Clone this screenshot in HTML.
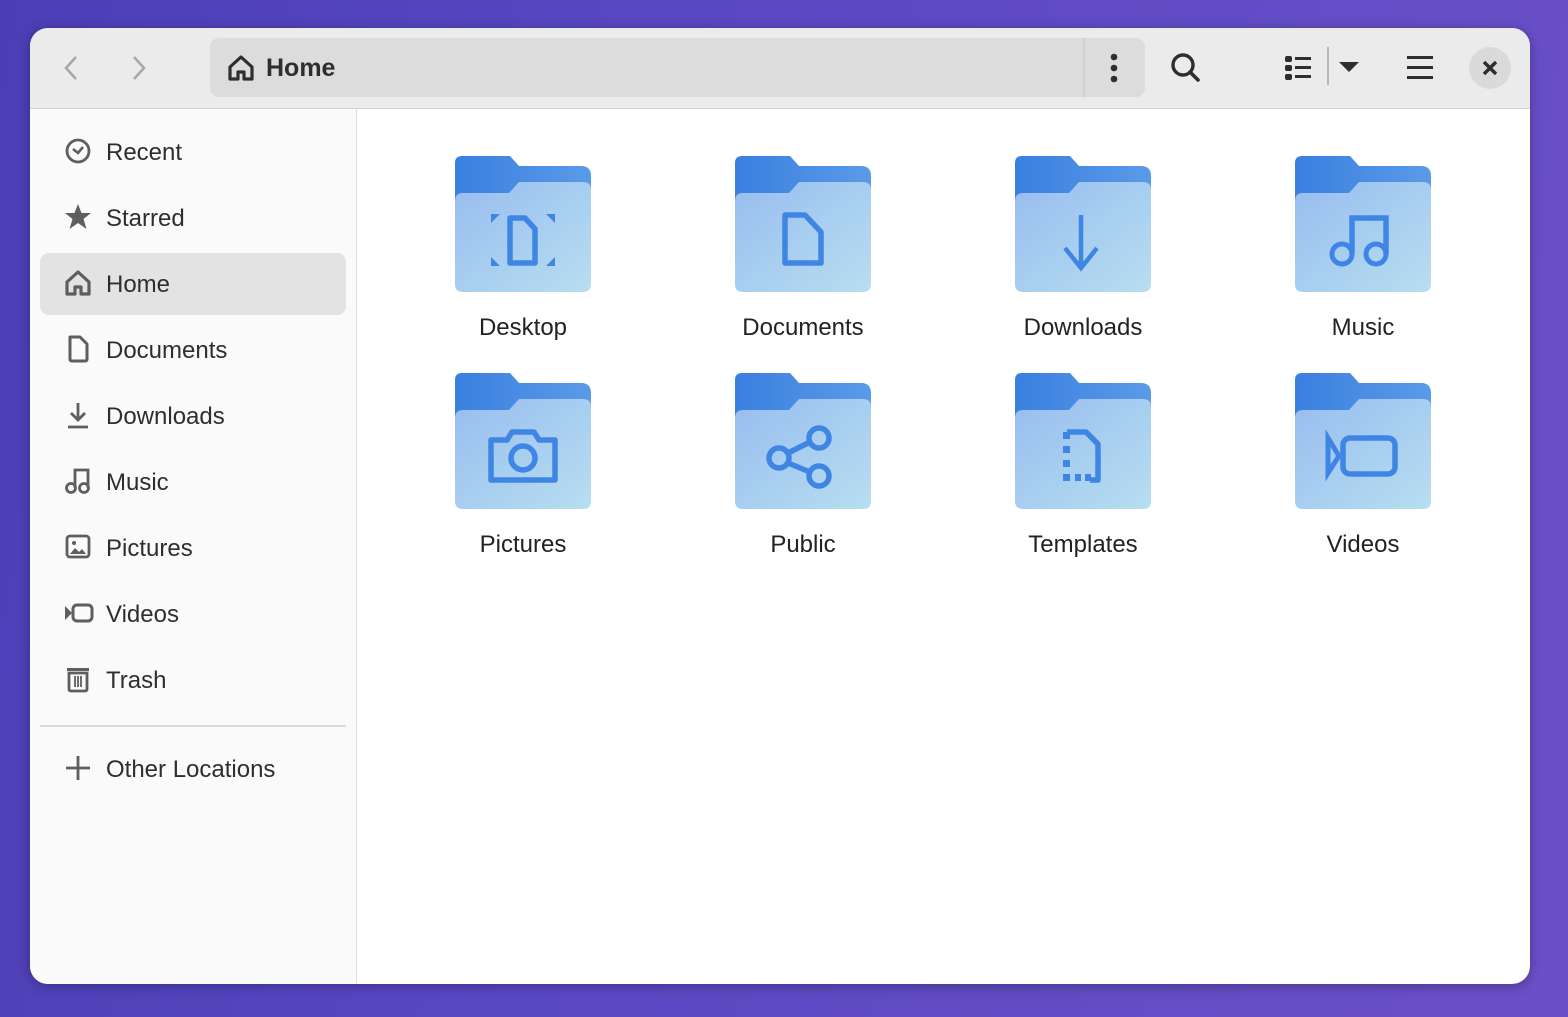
<!DOCTYPE html>
<html><head><meta charset="utf-8"><style>
*{margin:0;padding:0;box-sizing:border-box}
body{width:1568px;height:1017px;overflow:hidden;position:relative;font-family:"Liberation Sans",sans-serif;
background:linear-gradient(100deg,#4b3fb5 0%,#5a48c2 40%,#6a50c8 100%)}
.win{position:absolute;left:30px;top:28px;width:1500px;height:956px;border-radius:18px;overflow:hidden;background:#fff;box-shadow:0 2px 12px rgba(0,0,0,.3)}
.hdr{position:absolute;left:0;top:0;width:1500px;height:81px;background:#ebebeb;border-bottom:1px solid #d4d4d4}
.side{position:absolute;left:0;top:81px;width:327px;height:875px;background:#fafafa;border-right:1px solid #dedede}
.path{position:absolute;left:180px;top:10px;width:935px;height:59px;background:#dcdcdc;border-radius:9px}
.path .sep{position:absolute;left:873px;top:0;width:2px;height:59px;background:#cfcfcf}
.ptxt{position:absolute;left:56px;top:16px;font-size:25px;font-weight:bold;color:#2e2e2e}
.it{position:absolute;left:10px;width:306px;height:62px;border-radius:9px;font-size:24px;color:#2e2e2e}
.it span{position:absolute;left:66px;top:18px}
.it svg{position:absolute;left:24px;top:16px}
.sel{background:#e3e3e3}
.f{position:absolute;width:136px;height:138px}
.lb{position:absolute;width:240px;text-align:center;font-size:24px;color:#222}
</style></head><body>
<svg width="0" height="0" style="position:absolute"><defs>
<linearGradient id="gb" x1="0" y1="0" x2="1" y2="0"><stop offset="0" stop-color="#3a80df"/><stop offset="1" stop-color="#5a9ae8"/></linearGradient>
<linearGradient id="gf" x1="0" y1="0" x2="1" y2="1"><stop offset="0" stop-color="#98bdf0"/><stop offset="1" stop-color="#b7def0"/></linearGradient>
<symbol id="fold" viewBox="0 0 136 138">
<path d="M0 8Q0 1 7 1H55L64 11H126Q136 11 136 21V120H0Z" fill="url(#gb)"/>
<path d="M0 46Q0 38 8 38H54L64 27H128Q136 27 136 35V129Q136 137 128 137H8Q0 137 0 129Z" fill="url(#gf)"/>
</symbol></defs></svg>

<div class="win">
<div class="hdr">
<svg style="position:absolute;left:30px;top:26px" width="24" height="28" viewBox="0 0 24 28"><path d="M16 3L6 14L16 25" stroke="#a8a8a8" stroke-width="2.6" fill="none"/></svg>
<svg style="position:absolute;left:98px;top:26px" width="24" height="28" viewBox="0 0 24 28"><path d="M6 3L16 14L6 25" stroke="#a8a8a8" stroke-width="2.6" fill="none"/></svg>
<div class="path">
<svg style="position:absolute;left:17px;top:16px" width="28" height="28" viewBox="0 0 28 28"><path d="M3 13L14 3L25 13V25H17V18H11V25H3Z" stroke="#2e2e2e" stroke-width="3.2" fill="none" stroke-linejoin="round"/></svg>
<div class="ptxt">Home</div>
<div class="sep"></div>
<svg style="position:absolute;left:896px;top:14px" width="16" height="32"><circle cx="8" cy="5" r="3.3" fill="#2e2e2e"/><circle cx="8" cy="16" r="3.3" fill="#2e2e2e"/><circle cx="8" cy="27" r="3.3" fill="#2e2e2e"/></svg>
</div>
<svg style="position:absolute;left:1140px;top:24px" width="32" height="32" viewBox="0 0 32 32"><circle cx="13" cy="13" r="10" stroke="#2e2e2e" stroke-width="3.4" fill="none"/><path d="M20 20L28 28" stroke="#2e2e2e" stroke-width="3.6" stroke-linecap="round"/></svg>
<svg style="position:absolute;left:1254px;top:26px" width="28" height="28" viewBox="0 0 28 28"><rect x="1" y="2" width="7" height="6" rx="2" fill="#2e2e2e"/><rect x="1" y="11" width="7" height="6" rx="2" fill="#2e2e2e"/><rect x="1" y="20" width="7" height="6" rx="2" fill="#2e2e2e"/><rect x="11" y="3" width="16" height="3" fill="#2e2e2e"/><rect x="11" y="12" width="16" height="3" fill="#2e2e2e"/><rect x="11" y="21" width="16" height="3" fill="#2e2e2e"/></svg>
<div style="position:absolute;left:1297px;top:19px;width:2px;height:38px;background:#b8b8b8"></div>
<svg style="position:absolute;left:1308px;top:32px" width="22" height="14"><path d="M1 2H21L11 12Z" fill="#2e2e2e"/></svg>
<svg style="position:absolute;left:1376px;top:27px" width="28" height="26"><rect x="1" y="1" width="26" height="3" fill="#2e2e2e"/><rect x="1" y="11" width="26" height="3" fill="#2e2e2e"/><rect x="1" y="21" width="26" height="3" fill="#2e2e2e"/></svg>
<div style="position:absolute;left:1439px;top:19px;width:42px;height:42px;border-radius:50%;background:#dadada"></div>
<svg style="position:absolute;left:1451px;top:31px" width="18" height="18"><path d="M3 3L15 15M15 3L3 15" stroke="#2e2e2e" stroke-width="3.4"/></svg>
</div>

<div class="side">
<div class="it" style="top:12px"><svg width="28" height="28" viewBox="0 0 28 28"><circle cx="14" cy="14" r="11" stroke="#5e5e5e" stroke-width="2.8" fill="none"/><path d="M9 12L14 16L19 10" stroke="#5e5e5e" stroke-width="2.6" fill="none"/></svg><span>Recent</span></div>
<div class="it" style="top:78px"><svg width="28" height="28" viewBox="0 0 28 28"><path d="M14 1L17.5 10H27L19.5 16L22.5 26L14 20L5.5 26L8.5 16L1 10H10.5Z" fill="#5e5e5e"/></svg><span>Starred</span></div>
<div class="it sel" style="top:144px"><svg width="28" height="28" viewBox="0 0 28 28"><path d="M3 13L14 3L25 13V25H17V18H11V25H3Z" stroke="#5e5e5e" stroke-width="3.2" fill="none" stroke-linejoin="round"/></svg><span>Home</span></div>
<div class="it" style="top:210px"><svg width="28" height="28" viewBox="0 0 28 28"><path d="M6 2H16L23 9V24Q23 26 21 26H8Q6 26 6 24Z" stroke="#5e5e5e" stroke-width="3" fill="none" stroke-linejoin="round"/></svg><span>Documents</span></div>
<div class="it" style="top:276px"><svg width="28" height="28" viewBox="0 0 28 28"><path d="M14 2V19M7 12L14 19L21 12M4 26H24" stroke="#5e5e5e" stroke-width="2.8" fill="none"/></svg><span>Downloads</span></div>
<div class="it" style="top:342px"><svg width="28" height="28" viewBox="0 0 28 28"><path d="M11 21V3H24V21" stroke="#5e5e5e" stroke-width="2.8" fill="none"/><circle cx="7" cy="21" r="4.5" stroke="#5e5e5e" stroke-width="2.8" fill="none"/><circle cx="20" cy="21" r="4.5" stroke="#5e5e5e" stroke-width="2.8" fill="none"/></svg><span>Music</span></div>
<div class="it" style="top:408px"><svg width="28" height="28" viewBox="0 0 28 28"><rect x="3" y="3" width="22" height="21" rx="3" stroke="#5e5e5e" stroke-width="2.8" fill="none"/><path d="M6 21L11 15L15 19L18 16L22 21Z" fill="#5e5e5e"/><circle cx="10" cy="10" r="2" fill="#5e5e5e"/></svg><span>Pictures</span></div>
<div class="it" style="top:474px"><svg width="30" height="28" viewBox="0 0 30 28"><path d="M1 7L8 14L1 21Z" fill="#5e5e5e"/><rect x="9" y="6" width="19" height="16" rx="4" stroke="#5e5e5e" stroke-width="3" fill="none"/></svg><span>Videos</span></div>
<div class="it" style="top:540px"><svg width="28" height="28" viewBox="0 0 28 28"><rect x="3" y="3" width="22" height="3" fill="#5e5e5e"/><path d="M5 8H23V24Q23 26 21 26H7Q5 26 5 24Z" stroke="#5e5e5e" stroke-width="2.8" fill="none"/><path d="M11 11V22M14 11V22M17 11V22" stroke="#5e5e5e" stroke-width="1.8"/></svg><span>Trash</span></div>
<div style="position:absolute;left:10px;top:616px;width:306px;height:2px;background:#dadada"></div>
<div class="it" style="top:629px"><svg width="28" height="28" viewBox="0 0 28 28"><path d="M14 2V26M2 14H26" stroke="#5e5e5e" stroke-width="2.8"/></svg><span>Other Locations</span></div>
</div>
</div>

<svg class="f" style="left:455px;top:155px"><use href="#fold"/><g stroke="#3f85e4" fill="none" stroke-width="5.5"><path d="M55 63H70L80 74V108H55Z" stroke-linejoin="round"/></g><path d="M36 59H45L36 68ZM100 59H91L100 68ZM36 111H45L36 102ZM100 111H91L100 102Z" fill="#3f85e4"/></svg>
<svg class="f" style="left:735px;top:155px"><use href="#fold"/><path d="M50 60H70L86 77V108H50Z" stroke="#3f85e4" stroke-width="5.5" fill="none" stroke-linejoin="round"/></svg>
<svg class="f" style="left:1015px;top:155px"><use href="#fold"/><path d="M66 60V112M50 93L66 113L82 93" stroke="#3f85e4" stroke-width="4.5" fill="none"/></svg>
<svg class="f" style="left:1295px;top:155px"><use href="#fold"/><path d="M57 99V63H91V99" stroke="#3f85e4" stroke-width="5.5" fill="none"/><circle cx="47" cy="99" r="10" stroke="#3f85e4" stroke-width="5" fill="none"/><circle cx="81" cy="99" r="10" stroke="#3f85e4" stroke-width="5" fill="none"/></svg>

<svg class="f" style="left:455px;top:372px"><use href="#fold"/><path d="M36 68H52L57 60H79L84 68H100V108H36Z" stroke="#3f85e4" stroke-width="5.5" fill="none" stroke-linejoin="round"/><circle cx="68" cy="86" r="12" stroke="#3f85e4" stroke-width="5.5" fill="none"/></svg>
<svg class="f" style="left:735px;top:372px"><use href="#fold"/><g stroke="#3f85e4" stroke-width="5.5" fill="none"><circle cx="44" cy="86" r="10"/><circle cx="84" cy="66" r="10"/><circle cx="84" cy="104" r="10"/><path d="M53 81L75 70M53 91L75 100"/></g></svg>
<svg class="f" style="left:1015px;top:372px"><use href="#fold"/><path d="M52 60H71L83 72V108H75" stroke="#3f85e4" stroke-width="5.5" fill="none" stroke-linejoin="round"/><path d="M48 60H55V67H48ZM48 74H55V81H48ZM48 88H55V95H48ZM48 102H55V109H48ZM60 102H66V109H60ZM70 102H76V109H70Z" fill="#3f85e4"/></svg>
<svg class="f" style="left:1295px;top:372px"><use href="#fold"/><path d="M33 66L44 84L33 101Z" stroke="#3f85e4" stroke-width="5" fill="none"/><rect x="48" y="66" width="52" height="36" rx="7" stroke="#3f85e4" stroke-width="5.5" fill="none"/></svg>

<div class="lb" style="left:403px;top:314px">Desktop</div>
<div class="lb" style="left:683px;top:314px">Documents</div>
<div class="lb" style="left:963px;top:314px">Downloads</div>
<div class="lb" style="left:1243px;top:314px">Music</div>
<div class="lb" style="left:403px;top:531px">Pictures</div>
<div class="lb" style="left:683px;top:531px">Public</div>
<div class="lb" style="left:963px;top:531px">Templates</div>
<div class="lb" style="left:1243px;top:531px">Videos</div>
</body></html>
